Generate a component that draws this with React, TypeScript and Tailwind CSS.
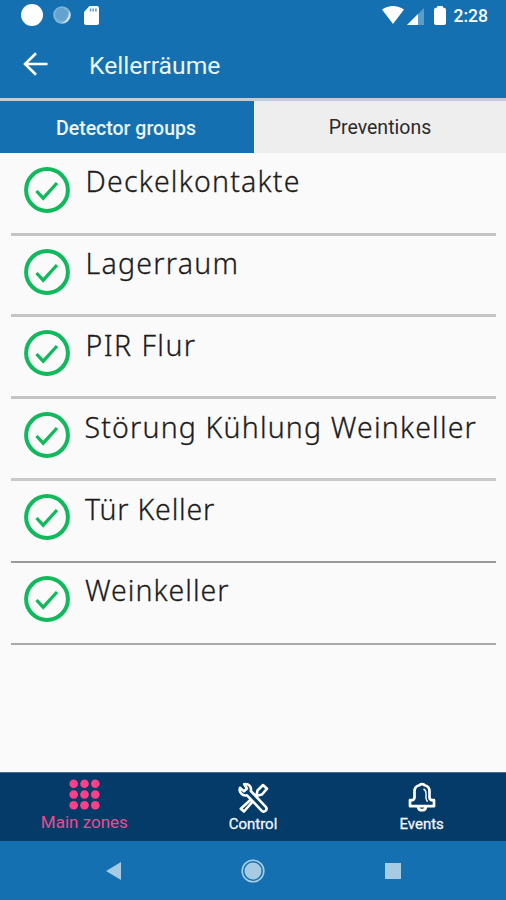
import React from 'react';

const groups = [
  { name: 'Deckelkontakte', text: 'tracking-[1.200px] ml-[14.500px]', line: 'h-[3px] bg-[#c4c4c4]' },
  { name: 'Lagerraum', text: 'tracking-[1.250px] ml-[14.500px]', line: 'h-[3px] bg-[#c4c4c4]' },
  { name: 'PIR Flur', text: 'tracking-[1.450px] ml-[14.500px]', line: 'h-[3px] bg-[#c4c4c4]' },
  { name: 'Störung Kühlung Weinkeller', text: 'tracking-[1.170px] ml-[13.500px]', line: 'h-[3px] bg-[#c8c8c8]' },
  { name: 'Tür Keller', text: 'tracking-[0.800px] ml-[14px]', line: 'h-[2px] bg-[#999999]' },
  { name: 'Weinkeller', text: 'tracking-[1.000px] ml-[14px]', line: 'h-[2px] bg-[#a8a8a8]' },
];

const CheckIcon: React.FC = () => (
  <svg className="w-[48px] h-[48px] shrink-0" viewBox="0 0 48 48" fill="none" stroke="#0fb95c">
    <circle cx="24" cy="24" r="20.9" strokeWidth="4" />
    <path d="M13.500 25l6.700 7.200L34 17" strokeWidth="3.300" />
  </svg>
);

const StatusBar: React.FC = () => (
  <div className="h-8 flex items-center justify-between pl-[21px] pr-[18px]">
    <div className="flex items-center">
      <div className="w-[22px] h-[22px] rounded-full bg-white -mt-[2px]" />
      <svg className="w-[18px] h-[18px] ml-[10px] -mt-[2px]" viewBox="0 0 18 18">
        <circle cx="9" cy="9" r="8.800" fill="#7db4d8" />
        <path d="M16.500 5a8.500 8.500 0 0 1-9 12.200c5-.6 8.500-5 9-12.200z" fill="#d3e9f6" />
        <circle cx="8.500" cy="8.500" r="6.500" fill="#64a3ce" />
      </svg>
      <svg className="w-[15px] h-[19px] ml-[13px] -mt-px" viewBox="0 0 15 19">
        <path d="M5.500 0H13a2 2 0 0 1 2 2v15a2 2 0 0 1-2 2H2a2 2 0 0 1-2-2V6z" fill="#fff" />
        <path d="M6.500 2.500v3M9.200 2.500v3M11.900 2.500v3" stroke="#5f9fcb" strokeWidth="1.600" />
      </svg>
    </div>
    <div className="flex items-center">
      <svg className="w-[22px] h-[18px] -mt-[2px]" viewBox="0 0 22 18">
        <path d="M0 3.600C6.500-1.100 15.500-1.100 22 3.600L11 18z" fill="#fff" />
      </svg>
      <svg className="w-[17px] h-[17px] ml-[3px]" viewBox="0 0 17 17">
        <path d="M17 0v17H0z" fill="#5b9dca" />
        <path d="M11 6v11H0z" fill="#fff" />
      </svg>
      <svg className="w-[12px] h-[19px] ml-[10px] -mt-px" viewBox="0 0 12 19">
        <path d="M3.500 0h5l.8 1.700H10a2 2 0 0 1 2 2V17a2 2 0 0 1-2 2H2a2 2 0 0 1-2-2V3.700a2 2 0 0 1 2-2h.7z" fill="#fff" />
      </svg>
      <span className="ml-[8px] text-[17.500px] font-medium text-white leading-8">2:28</span>
    </div>
  </div>
);

const ToolsIcon: React.FC = () => (
  <svg className="w-[32px] h-[32px]" viewBox="0 0 32 32" fill="#043b68" stroke="#fff" strokeWidth="2.600" strokeLinejoin="round">
    <path d="M20.500 8.500l5.500-5.500 4 3.700-5 5.800-4 1L7 29.500l-3.200-2.800L19.800 12z" />
    <path d="M3 5.800l4 3.400 3-2.700-2.800-4.300c4.300-.8 7.700 2.500 6.600 6.800l15 15.800c2.300 2.600-1.300 6.300-4 4L10 13.300C5.500 14.500 1.500 10.200 3 5.800z" />
  </svg>
);

const BellIcon: React.FC = () => (
  <svg className="w-[28px] h-[30px]" viewBox="0 0 28 30" fill="none" stroke="#fff" strokeWidth="2.700" strokeLinejoin="round">
    <path d="M10 24.500c.5 5 7.500 5 8 0" />
    <path d="M2 24.200v-6h2.500c1.500-.6 2-1.500 2-3V9.500c0-3.500 2-5.600 5-6.200.5-1.600 4.500-1.600 5 0 3 .6 5 2.700 5 6.200v5.700c0 1.500.5 2.400 2 3H26v6z" />
    <path d="M15.500 7c2 .8 2.500 2.500 2.500 4.500v5l1.500 3.300" strokeWidth="1.400" />
  </svg>
);

const DotsIcon: React.FC = () => (
  <svg className="w-[31px] h-[31px]" viewBox="0 0 31 31" fill="#ff4088">
    {[4.7, 15.5, 26.3].map((y) => [4.7, 15.5, 26.3].map((x) => <circle key={`${x}-${y}`} cx={x} cy={y} r="4.300" />))}
  </svg>
);

const App: React.FC = () => {
  return (
    <div className="w-[506px] h-[900px] flex flex-col overflow-hidden bg-[#fafafa] font-['Roboto',sans-serif]">
      <header className="h-[98px] shrink-0 bg-[#1470b0]">
        <StatusBar />
        <div className="h-[66px] flex items-center pl-[23px]">
          <svg className="w-[25px] h-[24px] -mt-[2px]" viewBox="0 0 25 24" fill="none" stroke="#fff" strokeWidth="2.600">
            <path d="M24.500 12H2M13 1.300L2 12l11 10.700" />
          </svg>
          <h1 className="ml-[41px] mt-[3px] text-[24.700px] text-[#eaf6ff] leading-none">Kellerräume</h1>
        </div>
      </header>

      <div className="h-[55px] shrink-0 flex border-t-[3px] border-[#c9cbd2]">
        <div className="w-[254px] bg-[#1470b0] text-[#eaf6ff] text-[19.500px] flex items-center justify-center pt-[4px] pr-[2px]">
          <span className="font-medium">Detector groups</span>
        </div>
        <div className="flex-1 bg-[#eeeeee] text-[#2b2b2b] text-[19.500px] flex items-center justify-center pt-[2px]">
          <span>Preventions</span>
        </div>
      </div>

      <main className="flex-1 pl-[11px] pr-[10px] pt-[0.800px]">
        {groups.map((group) => (
          <div key={group.name} className="h-[81.800px] flex flex-col">
            <div className="flex-1 flex items-start pl-[12px] pt-[12px]">
              <CheckIcon />
              <span className={`font-['Noto_Sans',sans-serif] font-light text-[28.500px] leading-[32px] -mt-[0.400px] whitespace-nowrap text-[#1c1c1c] [-webkit-text-stroke:0.300px_#1c1c1c] ${group.text}`}>
                {group.name}
              </span>
            </div>
            <div className={group.line} />
          </div>
        ))}
      </main>

      <nav className="h-[69px] shrink-0 grid grid-cols-3 bg-[#043b68] border-t border-[#4b6b8c]">
        <div className="flex flex-col items-center pt-[6px] text-[#ee4a8c]">
          <DotsIcon />
          <span className="mt-[2px] text-[17px] leading-[20px]">Main zones</span>
        </div>
        <div className="flex flex-col items-center pt-[9px] text-[#f2f7ff]">
          <ToolsIcon />
          <span className="text-[15px] leading-[20px] [-webkit-text-stroke:0.300px_#f2f7ff]">Control</span>
        </div>
        <div className="flex flex-col items-center pt-[9px] text-[#f2f7ff]">
          <BellIcon />
          <span className="mt-[2px] text-[15px] leading-[20px] [-webkit-text-stroke:0.300px_#f2f7ff]">Events</span>
        </div>
      </nav>

      <div className="h-[59px] shrink-0 flex items-center bg-[#1470b0] pl-[106px]">
        <svg className="w-[15px] h-[18px]" viewBox="0 0 15 18">
          <path d="M0 9L15 0v18z" fill="#a6cbe3" />
        </svg>
        <svg className="w-[24px] h-[24px] ml-[120px]" viewBox="0 0 24 24">
          <circle cx="12" cy="12" r="10.800" fill="none" stroke="#a6cbe3" strokeWidth="1.600" />
          <circle cx="12" cy="12" r="8.500" fill="#a6cbe3" />
        </svg>
        <div className="w-4 h-4 ml-[120px] bg-[#a6cbe3]" />
      </div>
    </div>
  );
};

export default App;
